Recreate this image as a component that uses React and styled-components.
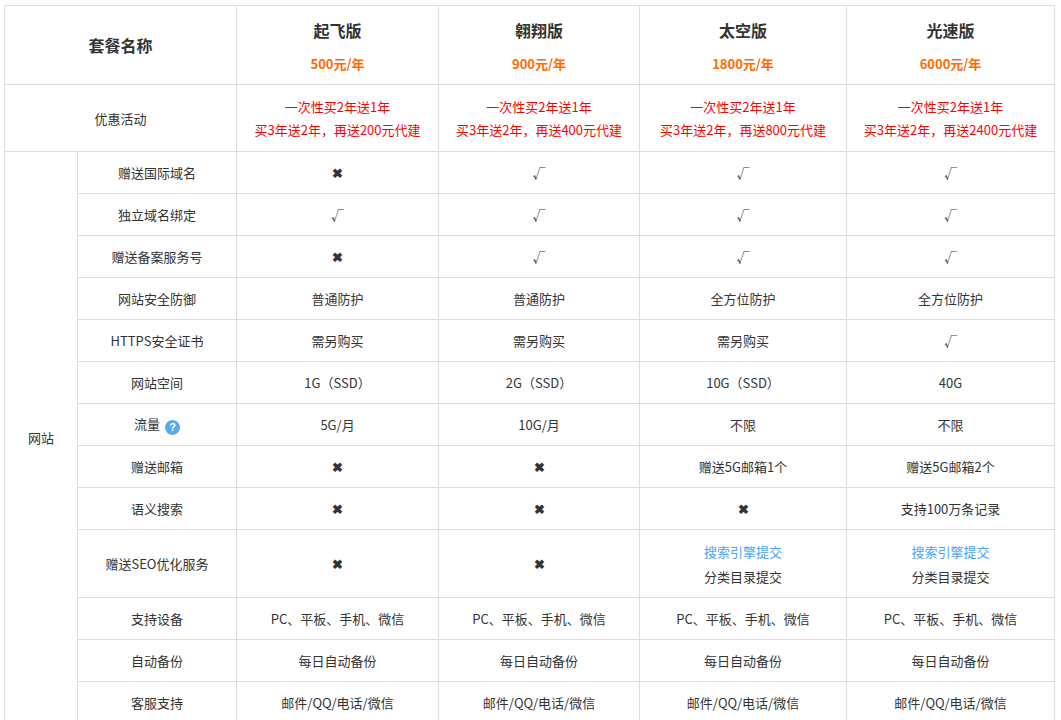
import React from "react";
import styled, { createGlobalStyle } from "styled-components";

const G = createGlobalStyle`
  body{margin:0;background:#fff;font-family:"Microsoft YaHei","Noto Sans CJK SC",sans-serif;color:#333;}
`;
const Wrap = styled.div`padding:5px 0 0 4px;`;
const Table = styled.table`
  border-collapse:collapse;table-layout:fixed;width:1051px;font-size:13px;
  td{border:1px solid #ddd;text-align:center;vertical-align:middle;padding:0;}
`;
const Row = styled.tr`height:${p => p.h || 42}px;`;
const Title = styled.div`font-size:16px;font-weight:bold;color:#333;`;
const Price = styled.div`font-size:13px;font-weight:bold;color:#ff6a00;margin-top:12px;`;
const Promo = styled.div`color:#f00;line-height:23px;`;
const Blue = styled.div`color:#4da3f5;line-height:25px;`;
const Line = styled.div`line-height:25px;`;
const X = styled.span`font-weight:bold;font-size:13px;`;
const Help = styled.span`
  display:inline-flex;width:15px;height:15px;border-radius:50%;background:#5aa9f0;color:#fff;
  font-size:11px;font-weight:bold;align-items:center;justify-content:center;margin-left:5px;vertical-align:-2px;
  font-family:"Liberation Sans",sans-serif;
`;
const x = <X>✖</X>;
const names = ["起飞版", "翱翔版", "太空版", "光速版"];
const prices = ["500元/年", "900元/年", "1800元/年", "6000元/年"];
const gifts = ["200", "400", "800", "2400"];
const rows = [
  ["赠送国际域名", [x, "√", "√", "√"]],
  ["独立域名绑定", ["√", "√", "√", "√"]],
  ["赠送备案服务号", [x, "√", "√", "√"]],
  ["网站安全防御", ["普通防护", "普通防护", "全方位防护", "全方位防护"]],
  ["HTTPS安全证书", ["需另购买", "需另购买", "需另购买", "√"]],
  ["网站空间", ["1G（SSD）", "2G（SSD）", "10G（SSD）", "40G"]],
  [<>流量<Help>?</Help></>, ["5G/月", "10G/月", "不限", "不限"]],
  ["赠送邮箱", [x, x, "赠送5G邮箱1个", "赠送5G邮箱2个"]],
  ["语义搜索", [x, x, x, "支持100万条记录"]],
  ["赠送SEO优化服务", [x, x, <><Blue>搜索引擎提交</Blue><Line>分类目录提交</Line></>, <><Blue>搜索引擎提交</Blue><Line>分类目录提交</Line></>], 68],
  ["支持设备", Array(4).fill("PC、平板、手机、微信")],
  ["自动备份", Array(4).fill("每日自动备份")],
  ["客服支持", Array(4).fill("邮件/QQ/电话/微信")],
];

export default function App() {
  return (
    <Wrap>
      <G />
      <Table>
        <colgroup>
          <col style={{ width: 73 }} /><col style={{ width: 159 }} />
          <col style={{ width: 202 }} /><col style={{ width: 201 }} />
          <col style={{ width: 207 }} /><col style={{ width: 208 }} />
        </colgroup>
        <tbody>
          <Row h={79}>
            <td colSpan={2}><Title>套餐名称</Title></td>
            {names.map((n, i) => <td key={n}><Title>{n}</Title><Price>{prices[i]}</Price></td>)}
          </Row>
          <Row h={67}>
            <td colSpan={2}>优惠活动</td>
            {gifts.map(g => <td key={g}><Promo>一次性买2年送1年</Promo><Promo>买3年送2年，再送{g}元代建</Promo></td>)}
          </Row>
          {rows.map(([label, vals, h], i) => (
            <Row h={h} key={i}>
              {i === 0 && <td rowSpan={rows.length}>网站</td>}
              <td>{label}</td>
              {vals.map((v, j) => <td key={j}>{v}</td>)}
            </Row>
          ))}
        </tbody>
      </Table>
    </Wrap>
  );
}
